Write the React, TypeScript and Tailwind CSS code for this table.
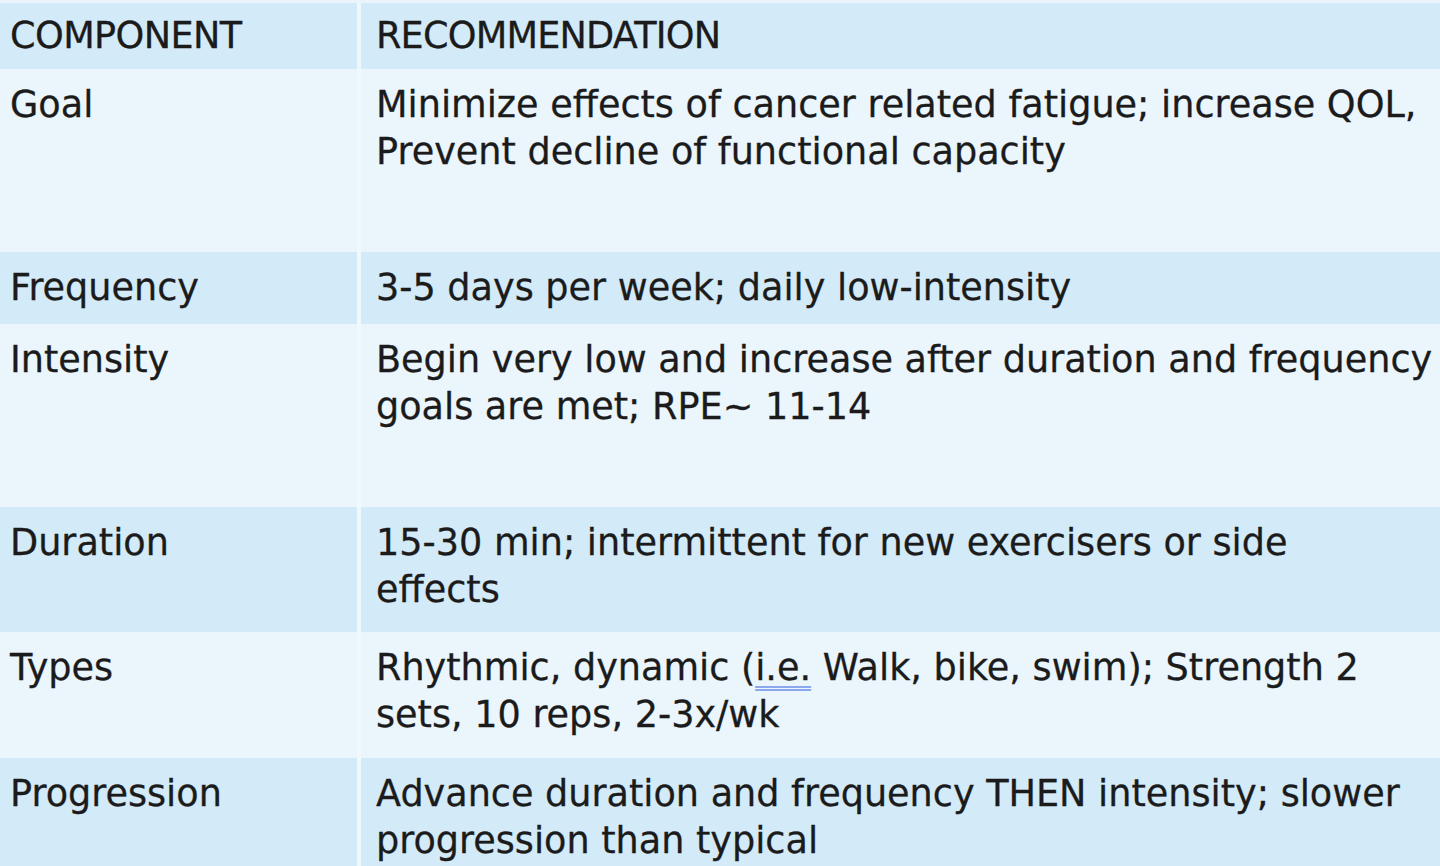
import React from "react";

const font = { fontFamily: '"DejaVu Sans", sans-serif' };

type Row = { label: string; h: string; bg: string; content: React.ReactNode };

const dark = "bg-[#d3eaf8]";
const light = "bg-[#eaf5fc]";

const rows: Row[] = [
  {
    label: "Goal",
    h: "h-[183px]",
    bg: light,
    content: (
      <>
        <div>Minimize effects of cancer related fatigue; increase QOL,</div>
        <div>Prevent decline of functional capacity</div>
      </>
    ),
  },
  {
    label: "Frequency",
    h: "h-[72px]",
    bg: dark,
    content: <div>3-5 days per week; daily low-intensity</div>,
  },
  {
    label: "Intensity",
    h: "h-[183px]",
    bg: light,
    content: (
      <>
        <div>Begin very low and increase after duration and frequency</div>
        <div>goals are met; RPE~ 11-14</div>
      </>
    ),
  },
  {
    label: "Duration",
    h: "h-[125px]",
    bg: dark,
    content: (
      <>
        <div>15-30 min; intermittent for new exercisers or side</div>
        <div>effects</div>
      </>
    ),
  },
  {
    label: "Types",
    h: "h-[126px]",
    bg: light,
    content: (
      <>
        <div>
          Rhythmic, dynamic (
          <span className="underline decoration-double decoration-[#8ba8ee] decoration-[2px] underline-offset-[6px]">i.e.</span>{" "}
          Walk, bike, swim); Strength 2
        </div>
        <div>sets, 10 reps, 2-3x/wk</div>
      </>
    ),
  },
  {
    label: "Progression",
    h: "flex-1",
    bg: dark,
    content: (
      <>
        <div>Advance duration and frequency THEN intensity; slower</div>
        <div>progression than typical</div>
      </>
    ),
  },
];

export default function App() {
  return (
    <div
      className="w-[1440px] h-[866px] overflow-hidden bg-[#eaf5fc] flex flex-col text-[#1b1b1b] text-[36.6px] leading-[47px] whitespace-nowrap [-webkit-text-stroke:0.3px_#1b1b1b]"
      style={font}
    >
      <div className="h-[3px] bg-[#e9f4fb] shrink-0" />
      <div className={`flex h-[66px] shrink-0 ${dark}`}>
        <div className="w-[361px] shrink-0 border-r-[4px] border-[#eef7fc] pl-[10px] pt-[9px] tracking-[-0.6px]">COMPONENT</div>
        <div className="flex-1 min-w-0 pl-[15px] pt-[9px] tracking-[-0.8px]">RECOMMENDATION</div>
      </div>
      {rows.map((r) => (
        <div key={r.label} className={`flex ${r.h} ${r.bg} shrink-0`}>
          <div className="w-[361px] shrink-0 border-r-[4px] border-[#f1f8fd] pl-[10px] pt-[12px]">{r.label}</div>
          <div className="flex-1 min-w-0 pl-[15px] pt-[12px]">{r.content}</div>
        </div>
      ))}
    </div>
  );
}
